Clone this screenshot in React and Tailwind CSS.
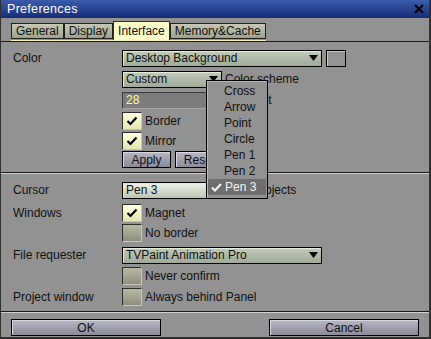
import React from 'react';

const font = { fontFamily: '"Liberation Sans", Arial, sans-serif' };

function Arrow() {
  return (
    <svg width="9" height="6" viewBox="0 0 9 6">
      <polygon points="0,0 9,0 4.5,6" fill="#000" />
    </svg>
  );
}

function Dropdown({ label, className }) {
  return (
    <div className={`flex h-[17px] items-center justify-between border border-black px-[3px] shadow-[inset_1px_1px_0_#e4eadc] ${className}`}>
      <span className="leading-none text-[#101010]">{label}</span>
      <Arrow />
    </div>
  );
}

function Check({ on }) {
  return (
    <div
      className={`flex h-[18px] w-[20px] shrink-0 items-center justify-center border border-t-[#2e2e2e] border-l-[#2e2e2e] border-b-[#c8c8b8] border-r-[#c8c8b8] bg-linear-to-b ${
        on ? 'from-[#ffffe4] to-[#e6e6b0]' : 'from-[#b8b8a4] to-[#8e8e7c]'
      }`}
    >
      {on && (
        <svg width="12" height="10" viewBox="0 0 12 10">
          <polyline points="1.5,5 4.5,8 10.5,1.5" fill="none" stroke="#000" strokeWidth="2.2" />
        </svg>
      )}
    </div>
  );
}

function Btn({ children, className }) {
  return (
    <div className={`flex h-[17px] items-center justify-center border border-black bg-linear-to-b from-[#b8b8c4] to-[#8a8a9a] text-[#101010] shadow-[inset_1px_1px_0_#d8d8e0] ${className}`}>
      {children}
    </div>
  );
}

function Row({ label, children, className }) {
  return (
    <div className={`flex items-center ${className}`}>
      <div className="w-[109px] shrink-0 text-[#101010]">{label}</div>
      {children}
    </div>
  );
}

function Tab({ children, active }) {
  return active ? (
    <div className="flex h-[19px] items-center border border-b-0 border-[#303030] bg-[#fcfcc8] px-[4px] text-[#101010]">{children}</div>
  ) : (
    <div className="mb-[1px] flex h-[16px] items-center border border-[#202020] bg-linear-to-b from-[#c4c8b4] to-[#9ea290] px-[4px] text-[#101010]">{children}</div>
  );
}

export default function App() {
  const items = ['Cross', 'Arrow', 'Point', 'Circle', 'Pen 1', 'Pen 2', 'Pen 3'];
  return (
    <div style={font} className="relative h-[339px] w-[431px] overflow-hidden border-l border-r-2 border-b-2 border-[#303030] bg-[#929292] text-[12px]">
      <div className="flex h-[18px] items-center justify-between bg-linear-to-b from-[#3c5cae] to-[#182c74] pl-[6px] pr-[4px]">
        <span className="text-[12.5px] tracking-[0.3px] text-white">Preferences</span>
        <svg width="10" height="10" viewBox="0 0 10 10" className="mr-[1px]">
          <path d="M1 1 L9 9 M9 1 L1 9" stroke="#000" strokeWidth="2" />
        </svg>
      </div>
      <div className="flex h-[23px] items-end pl-[10px]">
        <div className="flex items-end border-b border-[#f4f0b8]">
          <Tab>General</Tab>
          <Tab>Display</Tab>
          <Tab active>Interface</Tab>
          <Tab>Memory&amp;Cache</Tab>
        </div>
      </div>
      <div className="h-[1px] bg-[#1a1a1a]" />

      <div className="flex flex-col px-[12px]">
        <Row label="Color" className="mt-[7px]">
          <Dropdown label="Desktop Background" className="w-[200px] bg-linear-to-b from-[#c2cab8] to-[#a0aa98]" />
          <div className="ml-[4px] h-[17px] w-[20px] border border-black bg-[#939393] shadow-[inset_1px_1px_0_#c8c8c8]" />
        </Row>
        <Row className="mt-[3px]">
          <Dropdown label="Custom" className="w-[100px] bg-linear-to-b from-[#c2cab8] to-[#a0aa98]" />
          <span className="ml-[3px] text-[#101010]">Color scheme</span>
        </Row>
        <Row className="mt-[3px]">
          <div className="flex h-[17px] w-[100px] items-center border border-t-[#3a3a3a] border-l-[#3a3a3a] border-b-[#a8a8a8] border-r-[#a8a8a8] bg-[#7c7c7c] px-[3px] text-[#ffff90]">28</div>
          <span className="ml-[3px] text-[#101010]">Highlight</span>
        </Row>
        <Row className="mt-[3px]">
          <Check on />
          <span className="ml-[3px] text-[#101010]">Border</span>
        </Row>
        <Row className="mt-[2px]">
          <Check on />
          <span className="ml-[3px] text-[#101010]">Mirror</span>
        </Row>
        <Row className="mt-[1px]">
          <Btn className="w-[49px]">Apply</Btn>
          <Btn className="ml-[4px] w-[49px]">Reset</Btn>
        </Row>
      </div>

      <div className="mt-[4px] h-[1px] bg-[#1a1a1a]" />
      <div className="h-[1px] bg-[#d0d0d0]" />

      <div className="flex flex-col px-[12px]">
        <Row label="Cursor" className="mt-[7px]">
          <Dropdown label="Pen 3" className="w-[100px] bg-linear-to-b from-[#eef2ea] to-[#bcc4b4]" />
          <span className="ml-[3px] text-[#101010]">Show objects</span>
        </Row>
        <Row label="Windows" className="mt-[5px]">
          <Check on />
          <span className="ml-[3px] text-[#101010]">Magnet</span>
        </Row>
        <Row className="mt-[2px]">
          <Check />
          <span className="ml-[3px] text-[#101010]">No border</span>
        </Row>
        <Row label="File requester" className="mt-[4px]">
          <Dropdown label="TVPaint Animation Pro" className="w-[200px] bg-linear-to-b from-[#c2cab8] to-[#a0aa98]" />
        </Row>
        <Row className="mt-[3px]">
          <Check />
          <span className="ml-[3px] text-[#101010]">Never confirm</span>
        </Row>
        <Row label="Project window" className="mt-[3px]">
          <Check />
          <span className="ml-[3px] text-[#101010]">Always behind Panel</span>
        </Row>
      </div>

      <div className="mt-[5px] h-[1px] bg-[#1a1a1a]" />
      <div className="h-[1px] bg-[#d0d0d0]" />

      <div className="mt-[6px] flex justify-between px-[10px]">
        <Btn className="w-[150px]">OK</Btn>
        <Btn className="w-[150px]">Cancel</Btn>
      </div>

      <div className="absolute left-[205px] top-[80px] flex h-[119px] w-[62px] flex-col border border-black bg-[#929292] pt-[2px] shadow-[inset_1px_1px_0_#b8b8b8]">
        {items.map((it) => (
          <div
            key={it}
            className={`relative flex h-[16px] items-center pl-[17px] ${it === 'Pen 3' ? 'mx-[1px] bg-[#6e6e6e] pl-[16px] text-[#f4f4f4]' : 'text-[#101010]'}`}
          >
            {it === 'Pen 3' && (
              <svg width="11" height="9" viewBox="0 0 11 9" className="absolute left-[3px] top-[4px]">
                <polyline points="1,4.5 4,7.5 10,1" fill="none" stroke="#f4f4f4" strokeWidth="2" />
              </svg>
            )}
            {it}
          </div>
        ))}
      </div>
    </div>
  );
}
